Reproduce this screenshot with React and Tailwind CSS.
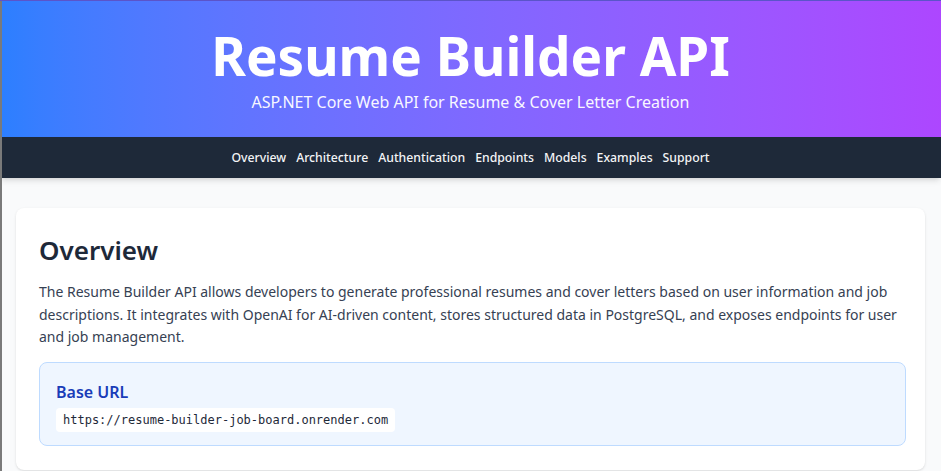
import React from 'react';

const navLinks = ["Overview", "Architecture", "Authentication", "Endpoints", "Models", "Examples", "Support"];

function App() {
    return (
        <div className="relative min-h-screen bg-gray-50 font-['Noto_Sans',sans-serif] overflow-hidden">
            {/* window edge */}
            <div className="absolute left-0 top-0 bottom-0 w-[2px] bg-[#7a7a7a] z-10" />
            <div className="absolute left-0 right-0 top-0 h-[1px] bg-[#5b54c9] z-10" />

            <header className="bg-gradient-to-r from-blue-500 to-purple-500 text-white text-center h-[137px] pt-[24px]">
                <h1 className="text-[53px] leading-[64px] font-bold">Resume Builder API</h1>
                <p className="text-[16px] leading-6 mt-[2px] opacity-95">ASP.NET Core Web API for Resume &amp; Cover Letter Creation</p>
            </header>

            <nav className="bg-gray-800 h-[41px] pt-[2px] flex items-center justify-center gap-[10px] shadow-md relative">
                {navLinks.map(link => (
                    <a key={link} href={`#${link.toLowerCase()}`} className="text-[12.25px] text-gray-100 font-medium">
                        {link}
                    </a>
                ))}
            </nav>

            <main className="px-4 pt-[30px]">
                <section className="bg-white rounded-lg shadow-sm pl-[23px] pr-[19px] pt-6 pb-6">
                    <h2 className="text-[26px] leading-9 font-semibold text-gray-800">Overview</h2>
                    <p className="mt-[13px] text-[14px] leading-[22.5px] text-gray-700">
                        The Resume Builder API allows developers to generate professional resumes and cover letters based on user information and job descriptions. It integrates with OpenAI for AI-driven content, stores structured data in PostgreSQL, and exposes endpoints for user and job management.
                    </p>
                    <div className="mt-[13px] bg-blue-50 border border-blue-200 rounded-lg px-4 pt-[17px] pb-[13px]">
                        <h3 className="text-[16px] leading-6 font-semibold text-blue-800">Base URL</h3>
                        <code className="inline-block mt-[4px] bg-white rounded px-[7px] py-[3px] text-[12px] leading-[18px] text-gray-800 font-['DejaVu_Sans_Mono',monospace]">
                            https://resume-builder-job-board.onrender.com
                        </code>
                    </div>
                </section>
            </main>
        </div>
    );
}

export default App;
